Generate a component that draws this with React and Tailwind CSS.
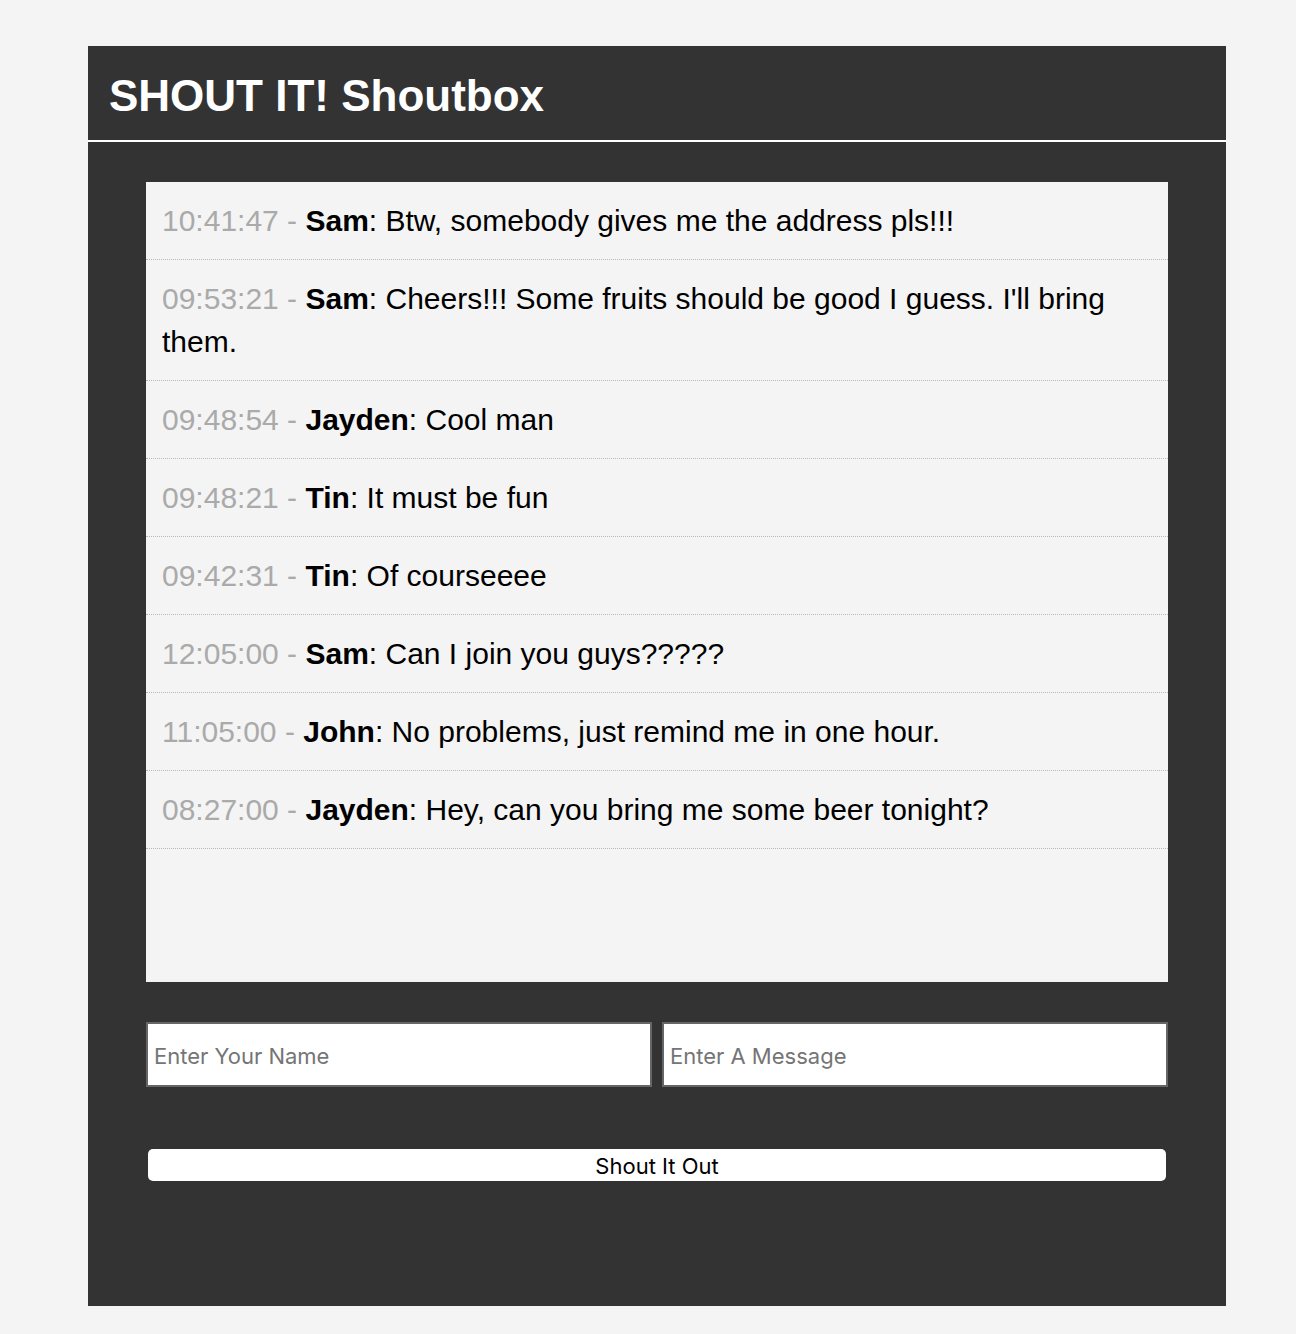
const shouts = [
  { time: '10:41:47', user: 'Sam', message: 'Btw, somebody gives me the address pls!!!' },
  { time: '09:53:21', user: 'Sam', message: "Cheers!!! Some fruits should be good I guess. I'll bring them." },
  { time: '09:48:54', user: 'Jayden', message: 'Cool man' },
  { time: '09:48:21', user: 'Tin', message: 'It must be fun' },
  { time: '09:42:31', user: 'Tin', message: 'Of courseeee' },
  { time: '12:05:00', user: 'Sam', message: 'Can I join you guys?????' },
  { time: '11:05:00', user: 'John', message: 'No problems, just remind me in one hour.' },
  { time: '08:27:00', user: 'Jayden', message: 'Hey, can you bring me some beer tonight?' },
];

export default function App() {
  return (
    <div className="min-h-[1334px] bg-[#f4f4f4] pt-[46px] font-['Liberation_Sans',Arial,sans-serif]">
      <div className="ml-[88px] h-[1260px] w-[1138px] bg-[#333333]">
        <header className="flex h-[96px] items-center border-b-2 border-white px-[21px] pt-[6px]">
          <h1 className="text-[44px] font-bold text-white">SHOUT IT! Shoutbox</h1>
        </header>

        <div className="px-[58px] pt-[40px]">
          <ul className="h-[800px] bg-[#f4f4f4]">
            {shouts.map((s, i) => (
              <li
                key={i}
                className="border-b border-dotted border-[#b8b8b8] px-4 py-[17px] text-[30px] leading-[43px] text-black"
              >
                <span className="text-[#aaaaaa]">{s.time} - </span>
                <strong>{s.user}</strong>: {s.message}
              </li>
            ))}
          </ul>

          <form className="mt-[40px]" onSubmit={e => e.preventDefault()}>
            <div className="grid grid-cols-2 gap-[10px]">
              <input
                type="text"
                placeholder="Enter Your Name"
                className="h-[65px] border-2 border-[#666666] bg-white px-[6px] pt-[3px] font-['Inter',sans-serif] text-[22px] text-black placeholder:text-[#757575]"
              />
              <input
                type="text"
                placeholder="Enter A Message"
                className="h-[65px] border-2 border-[#666666] bg-white px-[6px] pt-[3px] font-['Inter',sans-serif] text-[22px] text-black placeholder:text-[#757575]"
              />
            </div>
            <button
              type="submit"
              className="mx-[2px] mt-[62px] block h-[32px] w-[1018px] rounded-[5px] bg-white pt-[1px] font-['Inter',sans-serif] text-[22px] text-black"
            >
              Shout It Out
            </button>
          </form>
        </div>
      </div>
    </div>
  );
}
